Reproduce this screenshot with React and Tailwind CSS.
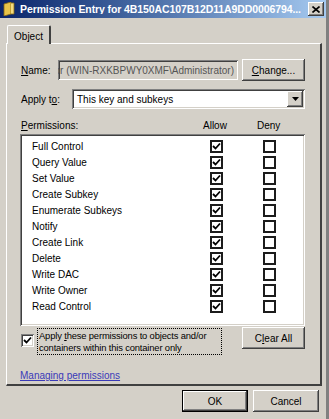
import React from "react";

const raised =
  "shadow-[inset_-1px_-1px_#404040,inset_1px_1px_#ffffff,inset_-2px_-2px_#808080,inset_2px_2px_#d4d0c8]";
const sunken =
  "shadow-[inset_1px_1px_#808080,inset_-1px_-1px_#ffffff,inset_2px_2px_#404040,inset_-2px_-2px_#d4d0c8]";

function Check({ checked }) {
  return (
    <div className="w-[13px] h-[13px] border-2 border-[#1c1c1c] bg-white flex items-center justify-center">
      {checked && (
        <svg width="9" height="9" viewBox="0 0 9 9">
          <path d="M1 4 L3.5 6.5 L8 1.5" stroke="#000" strokeWidth="1.8" fill="none" />
        </svg>
      )}
    </div>
  );
}

function Button({ children, className = "", def = false }) {
  return (
    <div
      className={`flex items-center justify-center bg-[#d4d0c8] ${
        def
          ? "border border-black shadow-[inset_-1px_-1px_#404040,inset_1px_1px_#ffffff,inset_-2px_-2px_#808080]"
          : raised
      } ${className}`}
    >
      {children}
    </div>
  );
}

const perms = [
  "Full Control",
  "Query Value",
  "Set Value",
  "Create Subkey",
  "Enumerate Subkeys",
  "Notify",
  "Create Link",
  "Delete",
  "Write DAC",
  "Write Owner",
  "Read Control",
];

export default function App() {
  return (
    <div
      className="w-[329px] h-[419px] bg-[#d4d0c8] text-black overflow-hidden flex flex-col border-r-[3px] border-r-[#808080]"
      style={{ fontFamily: '"Liberation Sans", Arial, sans-serif', fontSize: "10px" }}
    >
      {/* title bar */}
      <div className="h-[18px] flex items-center bg-gradient-to-r from-[#0a246a] to-[#a6caf0] pl-[3px] pr-[2px] gap-[5px] shrink-0">
        <svg width="12" height="14" viewBox="0 0 12 14" className="shrink-0">
          <path d="M1 2 L8 0 L8 12 L1 14 Z" fill="#e8c44a" stroke="#8a6a10" strokeWidth="0.8" />
          <path d="M8 1 L11 1 L11 12 L8 12" fill="#f4dc80" stroke="#8a6a10" strokeWidth="0.8" />
        </svg>
        <div className="flex-1 min-w-0 text-white font-bold text-[10.5px] whitespace-nowrap overflow-hidden leading-none tracking-[-0.1px]">
          Permission Entry for 4B150AC107B12D11A9DD0006794...
        </div>
        <div className={`shrink-0 w-[16px] h-[14px] bg-[#d4d0c8] ${raised} flex items-center justify-center`}>
          <svg width="8" height="7" viewBox="0 0 8 7">
            <path d="M0.5 0.5 L7.5 6.5 M7.5 0.5 L0.5 6.5" stroke="#000" strokeWidth="1.6" />
          </svg>
        </div>
      </div>

      {/* tab */}
      <div className="pl-[7px] mt-[7px] flex h-[19px] relative z-10">
        <div className="w-[44px] h-[19px] bg-[#d4d0c8] border-t border-l border-white border-r-2 border-r-[#404040] rounded-t-[2px] flex items-center justify-center pt-[2px]">
          Object
        </div>
      </div>

      {/* panel */}
      <div className="ml-[6px] w-[316px] h-[343px] mt-[-1px] border-t border-l border-white border-r-2 border-b-2 border-r-[#404040] border-b-[#404040] pl-[14px] flex flex-col">
        {/* name row */}
        <div className="flex items-center mt-[15px] h-[22px]">
          <div className="w-[37px]"><span className="underline">N</span>ame:</div>
          <div className={`w-[180px] h-[20px] bg-[#d4d0c8] ${sunken} px-[4px] flex items-center justify-end overflow-hidden whitespace-nowrap text-[#555]`}>
            Administrator (WIN-RXKBPWY0XMF\Administrator)
          </div>
          <Button className="ml-[4px] w-[63px] h-[22px]">
            <span><span className="underline">C</span>hange...</span>
          </Button>
        </div>

        {/* apply to */}
        <div className="flex items-center mt-[8px] h-[20px]">
          <div className="w-[51px]">Apply t<span className="underline">o</span>:</div>
          <div className={`w-[233px] h-[20px] bg-white ${sunken} flex items-center p-[2px]`}>
            <div className="flex-1 pl-[3px]">This key and subkeys</div>
            <div className={`w-[16px] h-[16px] bg-[#d4d0c8] ${raised} flex items-center justify-center`}>
              <svg width="7" height="4" viewBox="0 0 7 4"><path d="M0 0 L7 0 L3.5 4 Z" fill="#000" /></svg>
            </div>
          </div>
        </div>

        {/* permissions header */}
        <div className="flex items-center mt-[9px] h-[14px]">
          <div className="w-[182px]"><span className="underline">P</span>ermissions:</div>
          <div className="w-[54px]">Allow</div>
          <div>Deny</div>
        </div>

        {/* list */}
        <div className={`ml-[-1px] mt-[2px] w-[285px] h-[192px] bg-white ${sunken} pt-[4px] pl-[12px] flex flex-col`}>
          {perms.map((p) => (
            <div key={p} className="flex items-center h-[16px]">
              <div className="w-[178px]">{p}</div>
              <Check checked />
              <div className="w-[40px]" />
              <Check />
            </div>
          ))}
        </div>

        {/* apply checkbox row */}
        <div className="flex mt-[1px]">
          <div className="pt-[7px] w-[16px]">
            <div className={`w-[13px] h-[13px] bg-white ${sunken} flex items-center justify-center`}>
              <svg width="9" height="9" viewBox="0 0 9 9">
                <path d="M1 4 L3.5 6.5 L8 1.5" stroke="#000" strokeWidth="1.8" fill="none" />
              </svg>
            </div>
          </div>
          <div className="w-[185px] h-[27px] mt-[1px] border border-dotted border-black px-[1px] leading-[12px] pt-[1px] text-[9.4px] tracking-[-0.15px] whitespace-nowrap overflow-hidden">
            Apply <span className="underline">t</span>hese permissions to objects and/or<br />containers within this container only
          </div>
          <Button className="ml-[20px] w-[63px] h-[22px]">
            <span>C<span className="underline">l</span>ear All</span>
          </Button>
        </div>

        <div className="mt-[13px] ml-[-1px] text-[#3a3ab8] underline">Managing permissions</div>
      </div>

      {/* bottom buttons */}
      <div className="flex justify-end gap-[5px] mt-[4px] pr-[7px]">
        <Button def className="w-[66px] h-[22px]">OK</Button>
        <Button className="w-[66px] h-[22px]">Cancel</Button>
      </div>
    </div>
  );
}
